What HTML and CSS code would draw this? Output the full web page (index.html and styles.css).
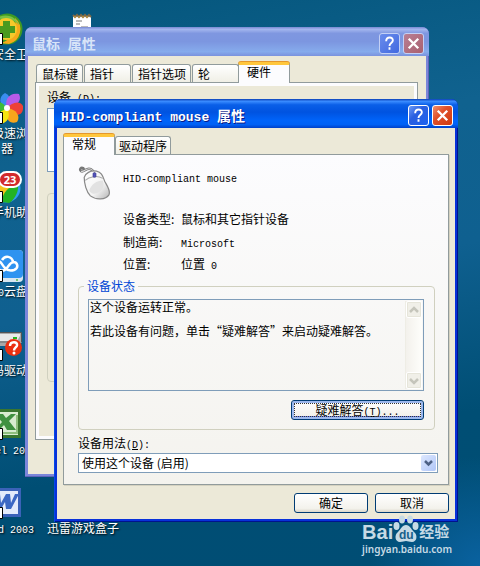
FILE: index.html
```html
<!DOCTYPE html>
<html lang="zh-CN">
<head>
    <meta charset="UTF-8">
    <meta name="viewport" content="width=device-width, initial-scale=1.0">
    <title>鼠标 属性</title>
    <link rel="stylesheet" href="styles.css">
</head>
<body>
    <!-- desktop icons -->
    <nav class="desktop">
        <a href="#" class="shortcut">
            <svg class="icon" viewBox="0 0 32 32">
                <circle cx="16" cy="16" r="15.500" fill="#3f9a22"/>
                <path d="M24 5a15 15 0 0 1-6 26l-9-1C20 28 26 18 24 5z" fill="#f6a91a"/>
                <path d="M8 4c9-4 18 1 20 8-4-5-11-7-17-4z" fill="#79c143"/>
                <circle cx="15" cy="16" r="11" fill="#f6c92a"/>
                <path d="M12 8h7v5h5v7h-5v5h-7v-5H7v-7h5z" fill="#4a9a1f"/>
                <path d="M.5 20.500h11v11H.5z" fill="#fff" stroke="#000"/>
            </svg>
            <span class="caption"><span class="lat">360</span>安全卫士</span>
        </a>
        <a href="#" class="shortcut">
            <svg class="icon" viewBox="0 0 32 32">
                <path d="M16 16C8 14 7 5 14 1c5 2 7 8 2 15z" fill="#3b8df0"/>
                <path d="M16 16C13 8 18 0 28 2c3 6-1 12-12 14z" fill="#b65be8"/>
                <path d="M16 16c5-6 13-8 16-2 1 9-7 13-16 2z" fill="#ee4136"/>
                <path d="M16 16c9 1 14 8 10 14-8 3-13-4-10-14z" fill="#f8a51c"/>
                <path d="M16 16c4 8 1 15-7 16-5-6-2-13 7-16z" fill="#f6e411"/>
                <path d="M16 16C9 22 1 20 0 14c3-6 10-6 16 2z" fill="#3dbb39"/>
                <circle cx="16" cy="16" r="3" fill="#fff"/>
                <path d="M.5 20.500h11v11H.5z" fill="#fff" stroke="#000"/>
            </svg>
            <span class="caption"><span class="lat">360</span>极速浏览器</span>
        </a>
        <a href="#" class="shortcut">
            <svg class="icon" viewBox="0 0 32 32">
                <circle cx="15" cy="17" r="14.500" fill="#2e9df0"/>
                <path d="M1 18C6 8 18 6 28 11c-4 8-11 12-17 21C5 30 1 25 1 18z" fill="#f6c21c"/>
                <path d="M11 31C11 22 18 14 27 14c1 8-5 16-9 18z" fill="#23b324"/>
                <path d="M.5 20.500h11v11H.5z" fill="#fff" stroke="#000"/>
            </svg>
            <span class="badge">23</span>
            <span class="caption"><span class="lat">360</span>手机助手</span>
        </a>
        <a href="#" class="shortcut">
            <svg class="icon" viewBox="0 0 32 32">
                <rect width="32" height="32" rx="4" fill="#d9e6f0"/>
                <rect width="32" height="28" rx="4" fill="#2f93f0"/>
                <path d="M7 18c-4-1-4-7 0-7 3 0 4 4 7 7 3 3 6 3 9 2 5-2 4-8-1-8-1-6-8-7-11-2M23 12c-4 0-5 4-8 7-2 2-5 2-8 0" fill="none" stroke="#fff" stroke-width="2.500"/>
                <circle cx="26" cy="30" r="1" fill="#58b94b"/>
                <path d="M.5 20.500h11v11H.5z" fill="#fff" stroke="#000"/>
            </svg>
            <span class="caption"><span class="lat">360</span>云盘</span>
        </a>
        <a href="#" class="shortcut">
            <svg class="icon" viewBox="0 0 32 32">
                <path d="M3 4h28v9l-4 4H0V9z" fill="#a8a8a8"/>
                <path d="M4 5h25v2l-3 5H0V9z" fill="#e9e9e9"/>
                <path d="M3 3.500h27.500V13" fill="none" stroke="#555"/>
                <path d="M22 8h4v2h-4z" fill="#23b51d"/>
                <path d="M0 13h26" stroke="#666"/>
                <circle cx="22.500" cy="18.500" r="8.500" fill="#ea2f10"/>
                <path d="M19 17c0-5 8-5 7-.5-.5 2-3 2-3 5" fill="none" stroke="#fff" stroke-width="2.500"/>
                <circle cx="23" cy="24" r="1.500" fill="#fff"/>
                <path d="M.5 20.500h11v11H.5z" fill="#fff" stroke="#000"/>
            </svg>
            <span class="caption"><span class="lat">U</span>号码驱动器</span>
        </a>
        <a href="#" class="shortcut">
            <svg class="icon" viewBox="0 0 32 32">
                <path d="M1.500 2.500h27v26h-27z" fill="#d8ecd0" stroke="#39762f" stroke-width="3"/>
                <path d="M26 7v18H8" fill="none" stroke="#8fbf7e" stroke-width="2"/>
                <path d="M4 6h8l3 4 5-4h5l-7 7 7 9h-9l-3-5-5 5H4l7-8z" fill="#3f9140"/>
                <path d="M.5 20.500h11v11H.5z" fill="#fff" stroke="#000"/>
            </svg>
            <span class="caption"><span class="lat">Excel 2003</span></span>
        </a>
        <a href="#" class="shortcut">
            <svg class="icon" viewBox="0 0 32 32">
                <path d="M1.500 2.500h27v26h-27z" fill="#e3ebfb" stroke="#3b62b8" stroke-width="3"/>
                <path d="M3 7h6l1 9 5-9h4l1 9 4-9h4l-8 15h-5l-1-7-4 7H5z" fill="#3c68c4"/>
                <path d="M.5 20.500h11v11H.5z" fill="#fff" stroke="#000"/>
            </svg>
            <span class="caption"><span class="lat">Word 2003</span></span>
        </a>
        <a href="#" class="shortcut note" aria-label="记事本">
            <svg class="icon" viewBox="0 0 32 32">
                <path d="M6 3h18v28H6z" fill="#fff"/>
                <path d="M9 8h6M9 11h4M14 14h7" stroke="#777"/>
                <path d="M6 2l2 2 2-2 2 2 2-2 2 2 2-2 2 2 2-2 2 2" fill="none" stroke="#7d6a48" stroke-width="2"/>
                <path d="M7 4h16" stroke="#d9a436" stroke-dasharray="2 2"/>
            </svg>
        </a>
        <a href="#" class="shortcut game">
            <span class="caption">迅雷游戏盒子</span>
        </a>
    </nav>

    <!-- mouse properties -->
    <section class="window inactive">
        <header class="titlebar">
            <h1>鼠标<span class="lat"> </span>属性</h1>
            <button class="help" aria-label="帮助"><svg viewBox="0 0 20 20"><path d="M6.500 7.500c0-5 7.500-5 7-.5-.3 2.500-3.500 2.500-3.500 5.500M10 14v2.500" fill="none" stroke="#fff" stroke-width="2"/></svg></button>
            <button class="close" aria-label="关闭"><svg viewBox="0 0 20 20"><path d="M5 5l10 10M15 5L5 15" stroke="#fff" stroke-width="2.500"/></svg></button>
        </header>
        <div class="body">
            <div class="tabs" role="tablist">
                <button class="tab" role="tab">鼠标键</button>
                <button class="tab" role="tab">指针</button>
                <button class="tab" role="tab">指针选项</button>
                <button class="tab" role="tab">轮</button>
                <button class="tab active" role="tab">硬件</button>
            </div>
            <div class="panel hardware">
                <p>设备<span class="lat"> (<u>D</u>):</span></p>
                <div class="device-list"></div>
                <div class="device-info"></div>
            </div>
        </div>
    </section>

    <!-- device properties -->
    <section class="window front">
        <header class="titlebar">
            <h1><span class="lat">HID-compliant mouse </span>属性</h1>
            <button class="help" aria-label="帮助"><svg viewBox="0 0 20 20"><path d="M6.500 7.500c0-5 7.500-5 7-.5-.3 2.500-3.500 2.500-3.500 5.500M10 14v2.500" fill="none" stroke="#fff" stroke-width="2"/></svg></button>
            <button class="close" aria-label="关闭"><svg viewBox="0 0 20 20"><path d="M5 5l10 10M15 5L5 15" stroke="#fff" stroke-width="2.500"/></svg></button>
        </header>
        <div class="body">
            <div class="tabs" role="tablist">
                <button class="tab active" role="tab">常规</button>
                <button class="tab" role="tab">驱动程序</button>
            </div>
            <div class="panel general">
                <div class="device">
                    <svg class="mouse" viewBox="0 0 32 34">
                        <defs>
                            <linearGradient id="shell" x1="0" y1="0" x2="1" y2="1">
                                <stop offset="0" stop-color="#fff"/>
                                <stop offset=".6" stop-color="#f4f4f4"/>
                                <stop offset="1" stop-color="#b5b5b5"/>
                            </linearGradient>
                        </defs>
                        <path d="M15 7c-1-3-4-4-6-3-3 1-4 3-6 2-2-2 0-4 2-3 1 1 0 2-1 2" fill="none" stroke="#777" stroke-width="2.500"/>
                        <path d="M15 7c-1-3-4-4-6-3-3 1-4 3-6 2" fill="none" stroke="#ddd"/>
                        <path d="M6 12c1-4 6-7 12-6 5 1 6 5 8 10 2 4 6 9 4 13-3 5-13 5-18 1-4-4-6-12-6-18z" fill="url(#shell)" stroke="#888" stroke-width="1.200"/>
                        <path d="M7 15c4-4 12-5 17-2M16 6v4" fill="none" stroke="#aaa"/>
                        <path d="M11 24c2-5 7-9 13-9 3 7-2 12-8 13-3 0-5-2-5-4z" fill="#e2e2e2"/>
                        <rect x="14.500" y="7.500" width="3" height="4.500" rx="1" fill="#5353b8" stroke="#333388" stroke-width=".5"/>
                    </svg>
                    <dl>
                        <dt class="name"><span class="lat">HID-compliant mouse</span></dt>
                        <dt>设备类型:</dt><dd>鼠标和其它指针设备</dd>
                        <dt>制造商:</dt><dd><span class="lat">Microsoft</span></dd>
                        <dt>位置:</dt><dd>位置<span class="lat"> 0</span></dd>
                    </dl>
                </div>
                <fieldset>
                    <legend>设备状态</legend>
                    <div class="status">
                        <textarea readonly aria-label="设备状态">这个设备运转正常。

若此设备有问题，单击“疑难解答”来启动疑难解答。</textarea>
                        <div class="scrollbar">
                            <button disabled aria-label="向上"><svg viewBox="0 0 14 14"><path d="M3 9l4-4 4 4" fill="none" stroke="#c5c5bb" stroke-width="2.500"/></svg></button>
                            <button disabled aria-label="向下"><svg viewBox="0 0 14 14"><path d="M3 5l4 4 4-4" fill="none" stroke="#c5c5bb" stroke-width="2.500"/></svg></button>
                        </div>
                    </div>
                    <button class="btn trouble">疑难解答<span class="lat">(<u>T</u>)...</span></button>
                </fieldset>
                <label for="usage">设备用法<span class="lat">(<u>D</u>):</span></label>
                <div class="combo">
                    <select id="usage">
                        <option>使用这个设备 (启用)</option>
                        <option>不要使用这个设备 (停用)</option>
                    </select>
                    <svg class="arrow" viewBox="0 0 15 16"><path d="M4 6l3.500 3.500L11 6" fill="none" stroke="#4d6185" stroke-width="2.500"/></svg>
                </div>
            </div>
            <footer>
                <button class="btn">确定</button>
                <button class="btn">取消</button>
            </footer>
        </div>
    </section>

    <div class="watermark">
        <div class="brand">
            <span>Bai</span>
            <span class="paw">
                <svg viewBox="0 0 26 28">
                    <ellipse cx="3.500" cy="11" rx="3" ry="4"/>
                    <ellipse cx="9" cy="4.500" rx="3" ry="4"/>
                    <ellipse cx="17" cy="4.500" rx="3" ry="4"/>
                    <ellipse cx="22.500" cy="11" rx="3" ry="4"/>
                    <path d="M13 10c4 0 5 4 8 7 4 3 3 10-2 10-3 0-4-1-6-1s-3 1-6 1c-5 0-6-7-2-10 3-3 4-7 8-7z"/>
                </svg>
                <b>du</b>
            </span>
            <span class="jy">经验</span>
        </div>
        <div class="site">jingyan.baidu.com</div>
    </div>
</body>
</html>
```
FILE: styles.css
```css
* {
    box-sizing: border-box;
}

body {
    margin: 0;
    min-height: 100vh;
    position: relative;
    overflow: hidden;
    font-family: "Noto Sans CJK SC", sans-serif;
    font-size: 12px;
    line-height: 14px;
    color: #000;
    background: radial-gradient(circle at 100% 100%, #0a62a0 0, rgba(0, 80, 120, 0) 110px),
                linear-gradient(170deg, #04567c 0%, #10628f 28%, #0f6090 50%, #004e74 76%, #004d74 100%);
}

h1, p, dl, dd {
    margin: 0;
}

button, select, textarea {
    font: inherit;
    color: inherit;
    padding: 0;
    margin: 0;
    border: 0;
    border-radius: 0;
}

svg {
    display: block;
}

.lat {
    font-family: "Liberation Mono", monospace;
    font-size: 10px;
    line-height: 1;
}

/* Desktop */
.desktop {
    display: grid;
    grid-template-columns: 76px 76px;
    grid-template-rows: repeat(7, 79px);
    grid-auto-flow: column;
    margin-left: -31px;
    padding-top: 13px;
}

.shortcut {
    display: flex;
    flex-direction: column;
    align-items: center;
    position: relative;
    color: #fff;
    text-decoration: none;
}

.icon {
    width: 32px;
    height: 32px;
}

.caption {
    width: 68px;
    margin-top: 2px;
    text-align: center;
    word-break: break-all;
    text-shadow: 1px 1px 2px #000;
}

.badge {
    position: absolute;
    left: 29px;
    top: 0;
    width: 24px;
    height: 17px;
    border: 2px solid #fff;
    border-radius: 9px;
    background: #d22a2c;
    font: bold 11px/13px "Noto Sans", sans-serif;
    text-align: center;
}

.note {
    grid-area: 1 / 2;
}

.game {
    grid-area: 7 / 2;
    padding-top: 32px;
}

.game .caption {
    width: 76px;
}

/* Windows */
.window {
    position: absolute;
    display: flex;
    flex-direction: column;
    width: 404px;
    padding: 0 3px 3px;
    border-radius: 7px 7px 0 0;
}

.inactive {
    left: 25px;
    top: 27px;
    height: 450px;
    background: #7b86da;
    box-shadow: inset -1px -1px #5d62b8;
}

.front {
    left: 54px;
    top: 99px;
    background: #0831d9;
    box-shadow: inset 1px 0 #0148e8, inset -1px -1px #00138c;
}

.titlebar {
    display: flex;
    align-items: center;
    gap: 3px;
    height: 29px;
    margin: 0 -3px;
    padding: 3px 5px 0 7px;
    border-radius: 7px 7px 0 0;
    background: linear-gradient(#0a3fb5 0%, #3a8cff 8%, #0a5fe8 20%, #0053e0 45%, #0064fa 75%, #0061f5 88%, #0040c8 100%);
}

.inactive .titlebar {
    background: linear-gradient(#7688d2 0%, #a3b6ee 8%, #7f97e0 22%, #7c96e0 50%, #86abec 85%, #7b92dd 100%);
}

.titlebar h1 {
    flex: 1;
    font-size: 14px;
    line-height: 20px;
    color: #fff;
    text-shadow: 1px 1px #0a1883;
    white-space: pre;
}

.titlebar .lat {
    font-size: 13px;
}

.inactive h1 {
    color: #d8e4f8;
    text-shadow: none;
}

.titlebar button {
    width: 21px;
    height: 21px;
    border: 1px solid #fff;
    border-radius: 3px;
}

.help {
    background: linear-gradient(135deg, #6d9bf5, #2a5fe0 40%, #1c62f0);
}

.close {
    background: linear-gradient(135deg, #f0906f, #e0502a 40%, #cf3a10);
}

.inactive .titlebar button {
    border-color: #c3d0f5;
}

.inactive .help {
    background: linear-gradient(135deg, #6a8cec, #4169e0);
}

.inactive .close {
    background: linear-gradient(135deg, #b97f94, #a9606f);
}

.body {
    flex: 1;
    display: flex;
    flex-direction: column;
    padding: 6px;
    background: #ece9d8;
}

/* Tabs */
.tabs {
    display: flex;
    align-items: flex-end;
    height: 20px;
    padding-left: 2px;
}

.tab {
    height: 18px;
    margin-right: 1px;
    padding: 0 16px 0 5px;
    border: 1px solid #919b9c;
    border-bottom: 0;
    border-radius: 3px 3px 0 0;
    background: linear-gradient(#fff, #f0efe6);
    line-height: 16px;
}

.tab:first-child,
.tab:nth-child(3) {
    padding-right: 4px;
}

.tab:nth-child(4) {
    padding-right: 28px;
}

.tab.active {
    height: 21px;
    margin: 0 0 -1px -2px;
    padding: 0 18px 4px 8px;
    border-top: 3px solid #ffc73c;
    background: #fcfcfe;
    line-height: 14px;
    position: relative;
    z-index: 1;
    box-shadow: 0 -1px #e5972d;
}

.front .tab:last-child {
    padding: 0 3px;
}

.panel {
    border: 1px solid #919b9c;
    box-shadow: 1px 1px #d5d2c0;
}

.hardware {
    height: 358px;
    margin: 0 2px 0 1px;
    padding: 7px 11px;
    box-shadow: inset 0 0 0 3px #fcfcfe;
}

.hardware p {
    white-space: pre;
}

.device-list {
    height: 64px;
    margin-top: 3px;
    border: 1px solid #7f9db9;
    background: #fff;
}

.device-info {
    height: 189px;
    margin-top: 21px;
    border: 1px solid #d0d0bf;
    border-radius: 4px;
}

.general {
    padding: 10px 10px 11px 14px;
    background: linear-gradient(#fcfcfe, #f4f3ee);
}

/* Device */
.device {
    display: flex;
    gap: 12px;
}

.mouse {
    width: 33px;
    height: 35px;
}

dl {
    display: grid;
    grid-template-columns: 58px auto;
    grid-template-rows: 42px 24px 22px 22px;
    align-items: center;
    align-content: start;
    height: 114px;
}

.name {
    grid-column: 1 / 3;
    align-self: start;
    line-height: 24px;
}

/* Status box */
fieldset {
    margin: 0 3px 0 0;
    padding: 6px 10px 9px 9px;
    border: 1px solid #d0d0bf;
    border-radius: 4px;
    min-width: 0;
}

legend {
    padding: 0 3px;
    margin-left: -4px;
    color: #0046d5;
}

.status {
    display: flex;
    height: 92px;
    padding: 1px;
    border: 1px solid #7f9db9;
}

textarea {
    flex: 1;
    min-width: 0;
    background: transparent;
    line-height: 12px;
    resize: none;
    overflow: hidden;
    outline: 0;
}

.scrollbar {
    display: flex;
    flex-direction: column;
    justify-content: space-between;
    width: 17px;
    border-left: 1px solid #eeede5;
    background: linear-gradient(90deg, #f3f1ec, #fefefb);
}

.scrollbar button {
    width: 16px;
    height: 17px;
    border: 1px solid #fff;
    border-radius: 2px;
    background: #f0efe8;
    box-shadow: inset 0 0 0 1px #e6e5da;
}

.btn {
    width: 74px;
    height: 20px;
    border: 1px solid #003c74;
    border-radius: 3px;
    background: linear-gradient(#fff, #f3f2ec 80%, #dcd7cb);
    line-height: 16px;
}

.trouble {
    display: block;
    width: 133px;
    margin: 9px 0 0 auto;
    box-shadow: inset 0 0 0 2px #9db9ee, inset 0 -3px #6982ee;
    outline: 1px dotted #333;
    outline-offset: -4px;
}

label {
    display: block;
    margin: 6px 0 2px;
}

.combo {
    position: relative;
}

select {
    display: block;
    width: 100%;
    height: 20px;
    padding-left: 3px;
    border: 1px solid #7f9db9;
    background: #fff;
    appearance: none;
    line-height: 18px;
}

.arrow {
    position: absolute;
    top: 2px;
    right: 2px;
    width: 15px;
    height: 16px;
    border-radius: 2px;
    background: linear-gradient(135deg, #dde8fe, #b0c6f8);
    pointer-events: none;
}

footer {
    display: flex;
    justify-content: flex-end;
    gap: 7px;
    margin-top: 8px;
}

/* Watermark */
.watermark {
    position: absolute;
    right: 28px;
    bottom: 10px;
    color: #c6dae5;
    font-family: "Noto Sans", sans-serif;
}

.brand {
    display: flex;
    align-items: flex-end;
    font: bold 20px/22px "Liberation Sans", sans-serif;
}

.paw {
    position: relative;
}

.paw svg {
    width: 26px;
    height: 28px;
    fill: #c6dae5;
}

.paw b {
    position: absolute;
    left: 0;
    right: 0;
    bottom: 2px;
    font-size: 12px;
    line-height: 12px;
    text-align: center;
    color: #17608a;
}

.jy {
    font: bold 15px/24px "Noto Sans CJK SC", sans-serif;
}

.site {
    font-size: 10px;
    font-weight: 600;
    line-height: 13px;
}
```
